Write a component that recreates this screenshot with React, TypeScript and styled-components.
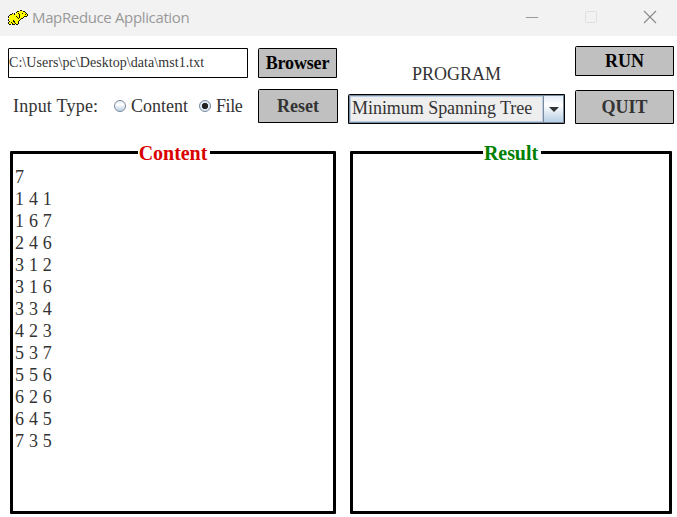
import React, { useState } from "react";
import styled, { createGlobalStyle } from "styled-components";

const GlobalStyle = createGlobalStyle`
  * { box-sizing: border-box; }
  body { margin: 0; background: #fff; overflow: hidden; }
`;

const Window = styled.div`
  width: 677px;
  height: 517px;
  display: flex;
  flex-direction: column;
  background: #fff;
  color: #333;
  font: 18px/22px "Liberation Serif", serif;
  white-space: nowrap;
`;

const TitleBar = styled.header`
  height: 36px;
  display: flex;
  align-items: center;
  padding: 0 20px 0 7px;
  background: #f2f2f2;
`;

const Caption = styled.h1`
  flex: 1;
  margin: 0 0 0 4px;
  padding-bottom: 2px;
  color: #999;
  font: 400 15px/20px "Open Sans", sans-serif;
  letter-spacing: -0.36px;
`;

const WindowControls = styled.div`
  display: flex;
  gap: 45px;
  padding-bottom: 3px;
  svg { display: block; }
`;

const Controls = styled.section`
  height: 107px;
  display: flex;
  gap: 10px;
  padding-left: 8px;
`;

const Column = styled.div<{ $width: number; $top: number; $gap?: number }>`
  width: ${(p) => p.$width}px;
  display: flex;
  flex-direction: column;
  gap: ${(p) => p.$gap ?? 0}px;
  padding-top: ${(p) => p.$top}px;
`;

const PathField = styled.input`
  height: 30px;
  width: 100%;
  padding: 0 0 1px;
  border: 1px solid #000;
  border-top-left-radius: 1px;
  outline: none;
  color: #333;
  background: #fff;
  font: 14px "Liberation Serif", serif;
  letter-spacing: 0.06px;
`;

const InputTypeRow = styled.div`
  display: flex;
  align-items: center;
  height: 22px;
  margin-top: 17px;
  padding-left: 5px;
`;

const TypeLabel = styled.span`
  width: 101px;
  letter-spacing: 0.22px;
`;

const RadioLabel = styled.label<{ $width: number; $spacing?: number }>`
  display: flex;
  align-items: center;
  gap: 5px;
  width: ${(p) => p.$width}px;
  letter-spacing: ${(p) => p.$spacing ?? 0}px;
`;

const Radio = styled.input`
  appearance: none;
  flex: none;
  width: 12px;
  height: 12px;
  margin: 0;
  border: 1px solid #7a8a99;
  border-radius: 50%;
  background: linear-gradient(#e4edf6, #fff 35%, #b8cfe5);
  &:checked {
    background: radial-gradient(circle, #222 0 2.8px, #dce8f3 3.5px);
  }
`;

const Button = styled.button<{ $width?: number; $height: number; $strong?: boolean; $spacing?: number }>`
  width: ${(p) => (p.$width ? p.$width + "px" : "100%")};
  height: ${(p) => p.$height}px;
  padding: 0;
  border: 1px solid #000;
  border-top-left-radius: 1.5px;
  background: #c0c0c0;
  color: ${(p) => (p.$strong ? "#000" : "#333")};
  font: bold 18px/22px "Liberation Serif", serif;
  letter-spacing: ${(p) => p.$spacing ?? 0}px;
`;

const ProgramLabel = styled.div`
  height: 22px;
  margin-bottom: 9px;
  text-align: center;
`;

const ComboBox = styled.button`
  display: flex;
  width: 100%;
  height: 30px;
  padding: 0;
  border: 1px solid #000;
  border-top-left-radius: 1.5px;
  background: #eee;
  color: #333;
  font: 18px/22px "Liberation Serif", serif;
`;

const ComboValue = styled.span`
  flex: 1;
  height: 28px;
  padding: 1px 0 0 2px;
  border: 1px solid #7a8a99;
  box-shadow: inset 0 0 0 1px #b8cfe5;
  text-align: left;
  letter-spacing: -0.04px;
`;

const ComboArrow = styled.span`
  width: 20px;
  height: 28px;
  display: grid;
  place-items: center;
  border: 1px solid #7a8a99;
  border-left: 0;
  background: linear-gradient(#e4edf6, #fff 35%, #b8cfe5);
`;

const Panels = styled.main`
  display: flex;
  gap: 14px;
  padding-left: 10px;
`;

const Panel = styled.fieldset<{ $width: number }>`
  width: ${(p) => p.$width}px;
  height: 371px;
  min-width: 0;
  margin: 0;
  padding: 0 0 0 2px;
  border: 3px solid #000;
  border-radius: 1px;
`;

const PanelTitle = styled.legend<{ $color: string }>`
  margin: 0 auto;
  padding: 0 2px;
  position: relative;
  left: -1px;
  height: 19px;
  color: ${(p) => p.$color};
  font: bold 20px/20px "Liberation Serif", serif;
  letter-spacing: -0.04px;
`;

const Lines = styled.pre`
  margin: 4px 0 0;
  font: inherit;
  letter-spacing: 0.2px;
`;

const content = ["7", "1 4 1", "1 6 7", "2 4 6", "3 1 2", "3 1 6", "3 3 4", "4 2 3", "5 3 7", "5 5 6", "6 2 6", "6 4 5", "7 3 5"];

// Elephant sprite: k = outline, y = body.
const sprite = [
  "............kk......",
  ".........kkyyyykk...",
  "........kyyyyyyyyk..",
  "....k.k.yykyyykyyyk.",
  "..kkyykyyyykyyyyykyk",
  ".kyyyyyyyyykyyyyyyyk",
  "k.yyyyyykyykyyyykkk.",
  "kyyyyyyyykykyyyk....",
  ".yyyyyyyyykyykk.....",
  "kyyyyyyyyyyyk.......",
  "k.yyykyyyyyk........",
  ".kyyykkyyyk.........",
  "kyykyykyyyk.........",
  "kyyykyykyyk.........",
  ".kk.kkk.kk..........",
];

function ElephantIcon() {
  return (
    <svg width="21" height="17" viewBox="0 0 21 17" shapeRendering="crispEdges">
      {sprite.flatMap((row, y) =>
        [...row].map((c, x) =>
          c === "." ? null : (
            <rect key={`${x}-${y}`} x={x + 1} y={y} width="1" height="1" fill={c === "k" ? "#151500" : "#ff0"} />
          )
        )
      )}
    </svg>
  );
}

export default function App() {
  const [path, setPath] = useState("C:\\Users\\pc\\Desktop\\data\\mst1.txt");
  const [type, setType] = useState("file");
  return (
    <Window>
      <GlobalStyle />
      <TitleBar>
        <ElephantIcon />
        <Caption>MapReduce Application</Caption>
        <WindowControls>
          <svg width="14" height="14"><path d="M1 7.5h12" stroke="#999" /></svg>
          <svg width="14" height="14"><rect x="1.5" y="1.5" width="11" height="11" rx="1" fill="none" stroke="#e0e0e0" /></svg>
          <svg width="14" height="14"><path d="M1 1l12 12M13 1L1 13" stroke="#888" strokeWidth="1.1" /></svg>
        </WindowControls>
      </TitleBar>
      <Controls>
        <Column $width={240} $top={12}>
          <PathField value={path} onChange={(e) => setPath(e.target.value)} />
          <InputTypeRow>
            <TypeLabel>Input Type:</TypeLabel>
            <RadioLabel $width={85}>
              <Radio type="radio" name="type" checked={type === "content"} onChange={() => setType("content")} />
              Content
            </RadioLabel>
            <RadioLabel $width={45} $spacing={-0.4}>
              <Radio type="radio" name="type" checked={type === "file"} onChange={() => setType("file")} />
              File
            </RadioLabel>
          </InputTypeRow>
        </Column>
        <Column $width={80} $top={12} $gap={11}>
          <Button $width={79} $height={30} $strong $spacing={-0.15}>Browser</Button>
          <Button $height={34}>Reset</Button>
        </Column>
        <Column $width={217} $top={27}>
          <ProgramLabel>PROGRAM</ProgramLabel>
          <ComboBox>
            <ComboValue>Minimum Spanning Tree</ComboValue>
            <ComboArrow>
              <svg width="10" height="5"><path d="M0 0h10L5 5z" fill="#333" /></svg>
            </ComboArrow>
          </ComboBox>
        </Column>
        <Column $width={99} $top={10} $gap={14}>
          <Button $height={30} $strong>RUN</Button>
          <Button $height={34}>QUIT</Button>
        </Column>
      </Controls>
      <Panels>
        <Panel $width={326}>
          <PanelTitle $color="#d90000">Content</PanelTitle>
          <Lines>{content.join("\n")}</Lines>
        </Panel>
        <Panel $width={322}>
          <PanelTitle $color="#008000">Result</PanelTitle>
        </Panel>
      </Panels>
    </Window>
  );
}
